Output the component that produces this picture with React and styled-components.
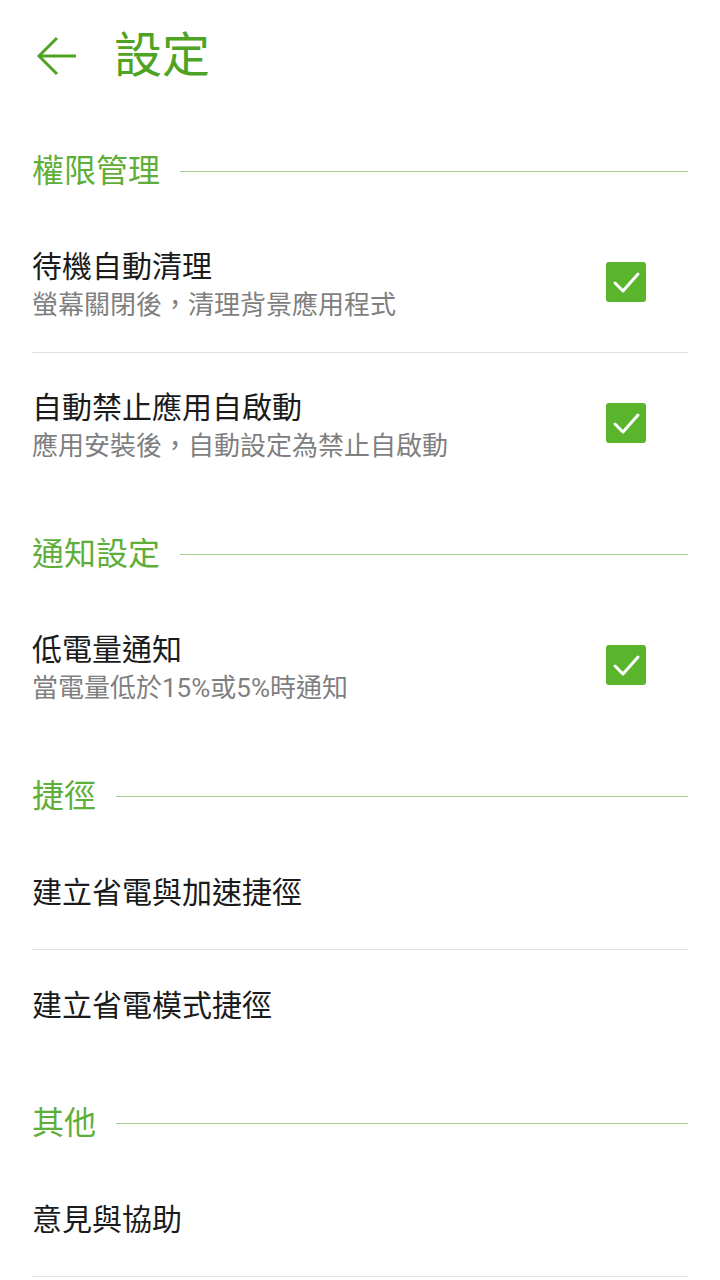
import styled, { createGlobalStyle } from 'styled-components';

const GlobalStyle = createGlobalStyle`
  body {
    margin: 0;
    background: #ffffff;
    font-family: Roboto, "Noto Sans CJK TC", sans-serif;
  }
`;

const Page = styled.div`
  width: 720px;
  min-height: 1280px;
  background: #ffffff;
`;

const Header = styled.div`
  height: 111px;
  display: flex;
  align-items: center;
  padding-left: 36px;
  box-sizing: border-box;
`;

const BackButton = styled.button`
  border: none;
  background: none;
  padding: 0;
  width: 42px;
  height: 42px;
  display: flex;
  align-items: center;
  cursor: pointer;
`;

const Title = styled.h1`
  margin: 0 0 0 36px;
  font-size: 48px;
  font-weight: 400;
  line-height: 56px;
  color: #4fa324;
`;

const Section = styled.section`
  padding: 0 32px;
`;

const SectionHeader = styled.div`
  display: flex;
  align-items: flex-start;
  height: 38px;
  padding: 41px 0 22px;
`;

const SectionLabel = styled.span`
  font-size: 32px;
  line-height: 38px;
  height: 38px;
  color: #60ae3a;
`;

const SectionLine = styled.div`
  flex: 1;
  height: 1px;
  margin: 19px 0 0 20px;
  background: #a3cf8c;
`;

const Item = styled.div`
  display: flex;
  align-items: center;
  box-sizing: border-box;
  height: ${(p) => (p.$tall ? 141 : 113)}px;
  border-bottom: 1px solid ${(p) => (p.$divider ? '#e3e3e3' : 'transparent')};
`;

const ItemText = styled.div`
  flex: 1;
  display: flex;
  flex-direction: column;
  padding-top: ${(p) => (p.$tall ? 8 : 0)}px;
`;

const ItemTitle = styled.div`
  font-size: 30px;
  line-height: 38px;
  color: #1b1b1b;
`;

const ItemSub = styled.div`
  font-size: 26px;
  line-height: 38px;
  color: #7f7f7f;
`;

const CheckBox = styled.div`
  width: 40px;
  height: 40px;
  border-radius: 3px;
  background: #5ab52d;
  margin-right: 42px;
  display: flex;
  align-items: center;
  justify-content: center;
`;

const Check = () => (
  <CheckBox>
    <svg width="40" height="40" viewBox="0 0 40 40">
      <path d="M9 21 L17 29 L32 12" fill="none" stroke="#ffffff" strokeWidth="3" strokeLinecap="round" strokeLinejoin="round" />
    </svg>
  </CheckBox>
);

const sections = [
  {
    label: '權限管理',
    items: [
      { title: '待機自動清理', sub: '螢幕關閉後，清理背景應用程式', checked: true, divider: true },
      { title: '自動禁止應用自啟動', sub: '應用安裝後，自動設定為禁止自啟動', checked: true },
    ],
  },
  {
    label: '通知設定',
    items: [{ title: '低電量通知', sub: '當電量低於15%或5%時通知', checked: true }],
  },
  {
    label: '捷徑',
    items: [
      { title: '建立省電與加速捷徑', divider: true },
      { title: '建立省電模式捷徑' },
    ],
  },
  {
    label: '其他',
    items: [{ title: '意見與協助', divider: true }],
  },
];

export default function App() {
  return (
    <Page>
      <GlobalStyle />
      <Header>
        <BackButton aria-label="back">
          <svg width="42" height="42" viewBox="0 0 42 42">
            <path d="M40 21 H3 M21 3 L3 21 L21 39" fill="none" stroke="#4fa324" strokeWidth="3" strokeLinejoin="miter" />
          </svg>
        </BackButton>
        <Title>設定</Title>
      </Header>
      {sections.map((s) => (
        <Section key={s.label}>
          <SectionHeader>
            <SectionLabel>{s.label}</SectionLabel>
            <SectionLine />
          </SectionHeader>
          {s.items.map((it) => (
            <Item key={it.title} $tall={!!it.sub} $divider={it.divider}>
              <ItemText $tall={!!it.sub}>
                <ItemTitle>{it.title}</ItemTitle>
                {it.sub && <ItemSub>{it.sub}</ItemSub>}
              </ItemText>
              {it.checked && <Check />}
            </Item>
          ))}
        </Section>
      ))}
    </Page>
  );
}
